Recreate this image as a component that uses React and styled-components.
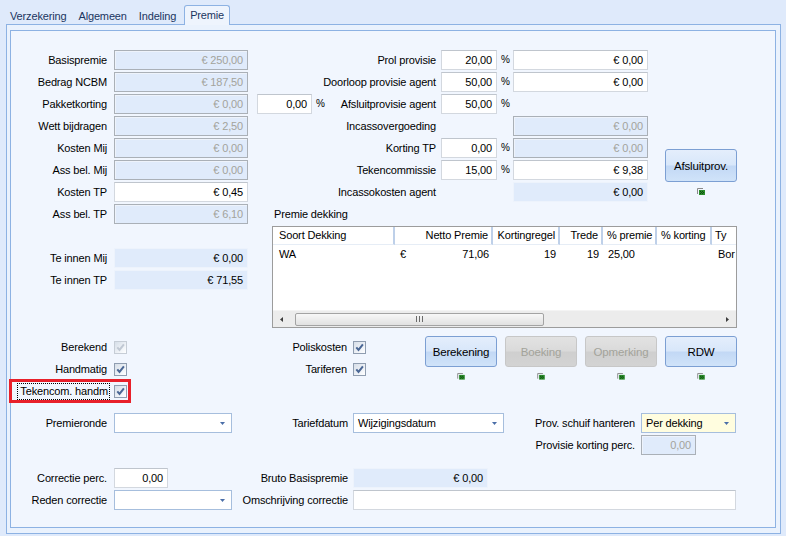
import React from "react";
import styled, { createGlobalStyle, css } from "styled-components";

const GlobalStyle = createGlobalStyle`
  html, body { margin: 0; padding: 0; background: #dfeafb; }
  body {
    font-family: "Liberation Sans", Arial, sans-serif;
    font-size: 11px;
    letter-spacing: -0.15px;
    color: #000;
  }
  * { box-sizing: border-box; }
`;

const at = css`
  grid-column: ${(p) => p.$c || "auto"};
  grid-row: ${(p) => p.$r || "auto"};
`;

const Screen = styled.div`
  width: 786px;
  height: 536px;
  overflow: hidden;
  background: #dfeafb;
`;

const TabStrip = styled.div`
  display: flex;
  align-items: flex-end;
  height: 24px;
  padding-left: 4px;
  position: relative;
  z-index: 1;
`;

const Tab = styled.div`
  height: 19px;
  padding: 3px 6px 0;
  line-height: 16px;
  color: #1b3560;
  ${(p) =>
    p.$active &&
    css`
      height: 20px;
      margin: 0 0 -1px 2px;
      padding: 1px 5px 0;
      line-height: 16px;
      background: #eef4fd;
      border: 1px solid #8db2e3;
      border-bottom: none;
      border-radius: 3px 3px 0 0;
    `}
`;

const Panel = styled.div`
  margin-left: 6px;
  width: 775px;
  height: 510px;
  border: 1px solid #8db2e3;
  background: #eaf2fd;
  padding: 5px 4px 0 3px;
`;

const Frame = styled.div`
  width: 766px;
  height: 498px;
  border: 1px solid #8db2e3;
  background: #f1f6fe;
  padding-top: 19px;
`;

const TopGrid = styled.div`
  display: grid;
  grid-template-columns: 103px 134px 9px 55px 11px 118px 56px 16px 135px 17px 72px;
  grid-template-rows: repeat(11, 22px) auto;
`;

const CheckGrid = styled.div`
  display: grid;
  grid-template-columns: 103px 13px 226px 13px 59px 72px 8px 72px 8px 72px 8px 72px;
  grid-template-rows: repeat(3, 22px);
  margin-top: 8px;
`;

const BottomGrid = styled.div`
  display: grid;
  grid-template-columns: 103px 118px 121px 151px 137px 95px;
  grid-template-rows: 20px 20px 9px 20px 20px;
  row-gap: 2px;
  margin-top: 11px;
`;

const Label = styled.div`
  ${at}
  height: 20px;
  line-height: 20px;
  white-space: nowrap;
  overflow: hidden;
  padding-right: ${(p) => (p.$pr ?? 7)}px;
  text-align: right;
`;

const kinds = {
  edit: css`
    background: #fff;
    border: 1px solid #d3d8df;
    border-top-color: #bfc5cd;
    color: #000;
  `,
  disabled: css`
    background: #e0ebfb;
    border: 1px solid #aab0b7;
    box-shadow: inset 1px 1px 0 #eef3fb;
    color: #a3a39c;
  `,
  readonly: css`
    background: #e0ebfb;
    border: 1px solid #edf3fc;
    color: #000;
  `,
};

const Box = styled.div`
  ${at}
  width: ${(p) => (p.$w ? `${p.$w}px` : "auto")};
  height: 20px;
  padding: 0 4px;
  line-height: 18px;
  text-align: right;
  white-space: nowrap;
  overflow: hidden;
  ${(p) => kinds[p.$kind || "edit"]}
`;

const Pct = styled.div`
  ${at}
  line-height: 20px;
  padding-left: ${(p) => (p.$pl ?? 4)}px;
  font-size: 10px;
`;

const ComboBox = styled.div`
  ${at}
  height: 20px;
  border: 1px solid #a6bedd;
  background: ${(p) => p.$bg || "#fff"};
  display: flex;
  align-items: center;
  justify-content: space-between;
  padding: 0 6px 0 4px;
  white-space: nowrap;
`;

const CheckLabel = styled.div`
  ${at}
  align-self: center;
  text-align: right;
  white-space: nowrap;
  padding-right: ${(p) => (p.$pr ?? 7)}px;
`;

const CheckBox = styled.div`
  ${at}
  align-self: center;
  width: 13px;
  height: 13px;
  border: 1px solid ${(p) => (p.$disabled ? "#c6cdd6" : "#8f9db0")};
  background: linear-gradient(135deg, #d6dee8 0%, #f2f5f9 70%, #fff 100%);
  display: flex;
  align-items: center;
  justify-content: center;
`;

const Focus = styled.span`
  display: inline-block;
  outline: 1px dotted #000;
  padding: 0 1px 0 2px;
  line-height: 15px;
`;

const Highlight = styled.div`
  ${at}
  position: relative;
  display: flex;
  align-items: center;
  &::after {
    content: "";
    position: absolute;
    left: -2px;
    right: -4px;
    top: -1px;
    bottom: -1px;
    border: 3px solid #e8202a;
    pointer-events: none;
  }
`;

const HighlightLabel = styled.div`
  width: 103px;
  text-align: right;
  padding-right: 5px;
  white-space: nowrap;
`;

const ButtonStack = styled.div`
  ${at}
  display: flex;
  flex-direction: column;
  align-items: center;
  padding-top: ${(p) => (p.$pt ?? 0)}px;
`;

const Btn = styled.div`
  width: 72px;
  height: 33px;
  border-radius: 3px;
  display: flex;
  align-items: center;
  justify-content: center;
  font-size: 11.5px;
  margin-bottom: 6px;
  ${(p) =>
    p.$disabled
      ? css`
          border: 1px solid #c7c7c7;
          background: linear-gradient(#e2e2e2 0%, #dadada 48%, #cfcfcf 52%, #d3d3d3 100%);
          color: #a3a39a;
        `
      : css`
          border: 1px solid #7c9fd3;
          background: linear-gradient(#e4eefc 0%, #d8e7fa 48%, #c2d8f5 52%, #d0e3f9 100%);
          color: #000;
        `}
`;

const Dekking = styled.div`
  grid-column: 4 / 12;
  grid-row: 9 / span 4;
  margin-left: 15px;
  height: 102px;
  border: 1px solid #9c9c9c;
  background: #fff;
  display: flex;
  flex-direction: column;
  overflow: hidden;
`;

const TableRow = styled.div`
  display: grid;
  grid-template-columns: 122px 98px 67px 43px 54px 55px 40px;
  height: 18px;
  flex-shrink: 0;
`;

const HeadCell = styled.div`
  border-right: 2px solid #bed0e9;
  border-bottom: 1px solid #e6edf6;
  text-align: ${(p) => p.$align || "left"};
  padding: 0 3px 0 ${(p) => (p.$pl ?? 3)}px;
  line-height: 17px;
  white-space: nowrap;
  overflow: hidden;
`;

const Cell = styled.div`
  padding: 0 ${(p) => (p.$pr ?? 3)}px 0 ${(p) => (p.$pl ?? 3)}px;
  line-height: 18px;
  white-space: nowrap;
  overflow: hidden;
  display: flex;
  justify-content: ${(p) => p.$justify || "flex-start"};
`;

const TableFill = styled.div`
  flex: 1;
`;

const HScroll = styled.div`
  height: 17px;
  flex-shrink: 0;
  background: #ececec;
  border-top: 1px solid #f4f4f4;
  display: flex;
  align-items: center;
`;

const ScrollArrow = styled.div`
  width: 17px;
  height: 17px;
  display: flex;
  align-items: center;
  justify-content: center;
`;

const ScrollTrack = styled.div`
  flex: 1;
  height: 17px;
  display: flex;
  align-items: center;
  padding-left: 5px;
`;

const Thumb = styled.div`
  width: 249px;
  height: 13px;
  border: 1px solid #a3a3a3;
  border-radius: 2px;
  background: linear-gradient(#f7f7f7, #e1e1e1);
  display: flex;
  align-items: center;
  justify-content: center;
`;

const SectionTitle = styled.div`
  grid-column: 4 / 12;
  grid-row: 8;
  padding-left: 17px;
  line-height: 20px;
`;

const Arrow = () => (
  <svg width="5" height="3" viewBox="0 0 5 3">
    <path d="M0 0H5L2.5 3Z" fill="#4a6ea8" />
  </svg>
);

const Combo = ({ value = "", ...rest }) => (
  <ComboBox {...rest}>
    <span>{value}</span>
    <Arrow />
  </ComboBox>
);

const Tick = ({ disabled }) => (
  <svg width="9" height="9" viewBox="0 0 9 9">
    <path
      d="M1.3 4.4L3.5 6.9L7.9 1.4"
      fill="none"
      stroke={disabled ? "#c0c8d3" : "#4a6795"}
      strokeWidth="2"
    />
  </svg>
);

const Check = ({ disabled, ...rest }) => (
  <CheckBox $disabled={disabled} {...rest}>
    <Tick disabled={disabled} />
  </CheckBox>
);

const Indicator = () => (
  <svg width="8" height="7" viewBox="0 0 8 7">
    <path d="M0.5 6V0.5H6" stroke="#8a8a8a" fill="none" />
    <rect x="2" y="2" width="6" height="5" fill="#2c8c2c" />
    <rect x="3" y="3" width="1" height="1" fill="#0d4f0d" />
    <rect x="5" y="3" width="1" height="1" fill="#0d4f0d" />
    <rect x="4" y="4" width="1" height="1" fill="#0d4f0d" />
    <rect x="6" y="4" width="1" height="1" fill="#0d4f0d" />
    <rect x="3" y="5" width="1" height="1" fill="#0d4f0d" />
    <rect x="5" y="5" width="1" height="1" fill="#0d4f0d" />
  </svg>
);

const Action = ({ label, disabled, ...rest }) => (
  <ButtonStack {...rest}>
    <Btn $disabled={disabled}>{label}</Btn>
    <Indicator />
  </ButtonStack>
);

const Grip = () => (
  <svg width="7" height="6" viewBox="0 0 7 6">
    <path d="M0.5 0V6M3.5 0V6M6.5 0V6" stroke="#6b6b6b" />
  </svg>
);

const leftFields = [
  { label: "Basispremie", value: "€ 250,00", kind: "disabled", row: 1 },
  { label: "Bedrag NCBM", value: "€ 187,50", kind: "disabled", row: 2 },
  { label: "Pakketkorting", value: "€ 0,00", kind: "disabled", row: 3 },
  { label: "Wett bijdragen", value: "€ 2,50", kind: "disabled", row: 4 },
  { label: "Kosten Mij", value: "€ 0,00", kind: "disabled", row: 5 },
  { label: "Ass bel. Mij", value: "€ 0,00", kind: "disabled", row: 6 },
  { label: "Kosten TP", value: "€ 0,45", kind: "edit", row: 7 },
  { label: "Ass bel. TP", value: "€ 6,10", kind: "disabled", row: 8 },
  { label: "Te innen Mij", value: "€ 0,00", kind: "readonly", row: 10 },
  { label: "Te innen TP", value: "€ 71,55", kind: "readonly", row: 11 },
];

const columns = [
  { title: "Soort Dekking", align: "left", pl: 6 },
  { title: "Netto Premie", align: "right" },
  { title: "Kortingregel", align: "right" },
  { title: "Trede", align: "right" },
  { title: "% premie", align: "left", pl: 4 },
  { title: "% korting", align: "left", pl: 4 },
  { title: "Ty", align: "left", pl: 3 },
];

export default function App() {
  return (
    <Screen>
      <GlobalStyle />
      <TabStrip>
        <Tab>Verzekering</Tab>
        <Tab>Algemeen</Tab>
        <Tab>Indeling</Tab>
        <Tab $active>Premie</Tab>
      </TabStrip>
      <Panel>
        <Frame>
          <TopGrid>
            {leftFields.map((f) => (
              <React.Fragment key={f.label}>
                <Label $c="1" $r={f.row}>{f.label}</Label>
                <Box $c="2" $r={f.row} $kind={f.kind}>{f.value}</Box>
              </React.Fragment>
            ))}

            <Label $c="6" $r="1" $pr={5}>Prol provisie</Label>
            <Box $c="7" $r="1">20,00</Box>
            <Pct $c="8" $r="1">%</Pct>
            <Box $c="9" $r="1">€ 0,00</Box>

            <Label $c="6" $r="2" $pr={5}>Doorloop provisie agent</Label>
            <Box $c="7" $r="2">50,00</Box>
            <Pct $c="8" $r="2">%</Pct>
            <Box $c="9" $r="2">€ 0,00</Box>

            <Box $c="4" $r="3">0,00</Box>
            <Pct $c="5" $r="3">%</Pct>
            <Label $c="6" $r="3" $pr={5}>Afsluitprovisie agent</Label>
            <Box $c="7" $r="3">50,00</Box>
            <Pct $c="8" $r="3">%</Pct>

            <Label $c="6" $r="4" $pr={5}>Incassovergoeding</Label>
            <Box $c="9" $r="4" $kind="disabled">€ 0,00</Box>

            <Label $c="6" $r="5" $pr={5}>Korting TP</Label>
            <Box $c="7" $r="5">0,00</Box>
            <Pct $c="8" $r="5">%</Pct>
            <Box $c="9" $r="5" $kind="disabled">€ 0,00</Box>

            <Label $c="6" $r="6" $pr={5}>Tekencommissie</Label>
            <Box $c="7" $r="6">15,00</Box>
            <Pct $c="8" $r="6">%</Pct>
            <Box $c="9" $r="6">€ 9,38</Box>

            <Label $c="6" $r="7" $pr={5}>Incassokosten agent</Label>
            <Box $c="9" $r="7" $kind="readonly">€ 0,00</Box>

            <Action $c="11" $r="5 / span 4" $pt={11} label="Afsluitprov." />

            <SectionTitle>Premie dekking</SectionTitle>
            <Dekking>
              <TableRow>
                {columns.map((col) => (
                  <HeadCell key={col.title} $align={col.align} $pl={col.pl}>
                    {col.title}
                  </HeadCell>
                ))}
              </TableRow>
              <TableRow>
                <Cell $pl={6}>WA</Cell>
                <Cell $justify="space-between" $pl={5} $pr={4}>
                  <span>€</span>
                  <span>71,06</span>
                </Cell>
                <Cell $justify="flex-end" $pr={4}>19</Cell>
                <Cell $justify="flex-end" $pr={4}>19</Cell>
                <Cell $pl={5}>25,00</Cell>
                <Cell />
                <Cell $pl={6}>Bor</Cell>
              </TableRow>
              <TableFill />
              <HScroll>
                <ScrollArrow>
                  <svg width="3" height="5" viewBox="0 0 3 5">
                    <path d="M3 0V5L0 2.5Z" fill="#3c3c3c" />
                  </svg>
                </ScrollArrow>
                <ScrollTrack>
                  <Thumb>
                    <Grip />
                  </Thumb>
                </ScrollTrack>
                <ScrollArrow>
                  <svg width="3" height="5" viewBox="0 0 3 5">
                    <path d="M0 0V5L3 2.5Z" fill="#3c3c3c" />
                  </svg>
                </ScrollArrow>
              </HScroll>
            </Dekking>
          </TopGrid>

          <CheckGrid>
            <CheckLabel $c="1" $r="1">Berekend</CheckLabel>
            <Check $c="2" $r="1" disabled />
            <CheckLabel $c="1" $r="2">Handmatig</CheckLabel>
            <Check $c="2" $r="2" />
            <Highlight $c="1 / span 2" $r="3">
              <HighlightLabel>
                <Focus>Tekencom. handm</Focus>
              </HighlightLabel>
              <Check />
            </Highlight>

            <CheckLabel $c="3" $r="1" $pr={6}>Poliskosten</CheckLabel>
            <Check $c="4" $r="1" />
            <CheckLabel $c="3" $r="2" $pr={6}>Tariferen</CheckLabel>
            <Check $c="4" $r="2" />

            <Action $c="6" $r="1 / span 2" label="Berekening" />
            <Action $c="8" $r="1 / span 2" label="Boeking" disabled />
            <Action $c="10" $r="1 / span 2" label="Opmerking" disabled />
            <Action $c="12" $r="1 / span 2" label="RDW" />
          </CheckGrid>

          <BottomGrid>
            <Label $c="1" $r="1">Premieronde</Label>
            <Combo $c="2" $r="1" />
            <Label $c="3" $r="1" $pr={5}>Tariefdatum</Label>
            <Combo $c="4" $r="1" value="Wijzigingsdatum" />
            <Label $c="5" $r="1" $pr={6}>Prov. schuif hanteren</Label>
            <Combo $c="6" $r="1" value="Per dekking" $bg="#fffddf" />

            <Label $c="5" $r="2" $pr={6}>Provisie korting perc.</Label>
            <Box $c="6" $r="2" $w={55} $kind="disabled">0,00</Box>

            <Label $c="1" $r="4">Correctie perc.</Label>
            <Box $c="2" $r="4" $w={54}>0,00</Box>
            <Label $c="3" $r="4" $pr={5}>Bruto Basispremie</Label>
            <Box $c="4" $r="4" $w={135} $kind="readonly">€ 0,00</Box>

            <Label $c="1" $r="5">Reden correctie</Label>
            <Combo $c="2" $r="5" />
            <Label $c="3" $r="5" $pr={5}>Omschrijving correctie</Label>
            <Box $c="4 / span 3" $r="5" />
          </BottomGrid>
        </Frame>
      </Panel>
    </Screen>
  );
}
